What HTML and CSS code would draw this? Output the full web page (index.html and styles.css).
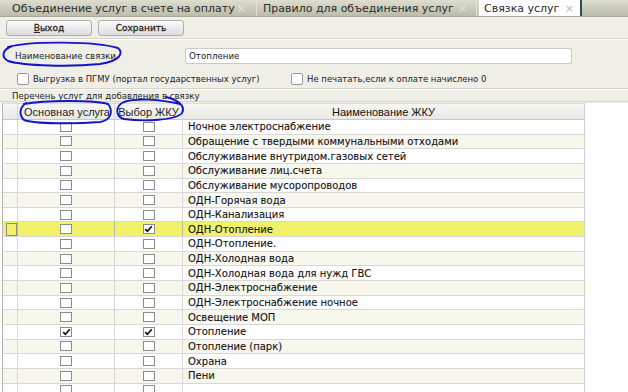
FILE: index.html
```html
<!DOCTYPE html>
<html lang="ru">
<head>
<meta charset="utf-8">
<title>Связка услуг</title>
<link rel="stylesheet" href="styles.css">
</head>
<body>
<div class="page">
  <div class="tabs">
    <div class="tab tab-1"><span class="tab-text">Объединение услуг в счете на оплату</span><span class="tab-x">×</span></div>
    <div class="tab tab-2"><span class="tab-text">Правило для объединения услуг</span><span class="tab-x">×</span></div>
    <div class="tab tab-active"><span class="tab-text">Связка услуг</span><span class="tab-x">×</span></div>
  </div>
  <div class="toolbar">
    <button class="btn"><u>В</u>ыход</button>
    <button class="btn">Сохранить</button>
  </div>
  <div class="form">
    <div class="name-row">
      <span class="name-label">Наименование связки</span>
      <div class="input">Отопление</div>
    </div>
    <div class="checks">
      <label class="check check-1"><span class="box"></span>Выгрузка в ПГМУ (портал государственных услуг)</label>
      <label class="check check-2"><span class="box"></span>Не печатать,если к оплате начислено 0</label>
    </div>
    <div class="sep"></div>
    <div class="group-title">Перечень услуг для добавления в связку</div>
  </div>
  <div class="grid">
    <div class="grow ghead">
      <div class="c c-rh"></div>
      <div class="c c-main">Основная услуга</div>
      <div class="c c-sel">Выбор ЖКУ</div>
      <div class="c c-name">Наименование ЖКУ</div>
    </div>
    <div id="rows"></div>
  </div>
  <svg class="annot" width="628" height="392" viewBox="0 0 628 392">
    <path d="M8 47 C 30 41, 95 41, 118 48 C 124 53, 120 61, 100 64 C 70 67, 25 66, 8 61 C 1 57, 2 50, 12 46" />
    <path d="M24 104 C 45 100, 95 100, 108 104 C 113 110, 112 120, 100 122 C 75 124, 35 124, 24 120 C 19 115, 19 108, 26 103" />
    <path d="M166 97 C 178 100, 186 106, 182 113 C 176 120, 145 122, 124 119 C 115 116, 115 106, 124 102 C 135 98, 160 99, 180 104" />
  </svg>
</div>
<script src="app.js"></script>
</body>
</html>
```

FILE: styles.css
```css
* { box-sizing: border-box; }
html, body { margin: 0; padding: 0; }
body {
  width: 628px;
  height: 392px;
  overflow: hidden;
  background: #ffffff;
  font-family: "DejaVu Sans", Verdana, sans-serif;
  color: #1e1e1e;
}
.page { position: relative; width: 628px; height: 392px; overflow: hidden; }

/* tabs */
.tabs {
  height: 17px;
  display: flex;
  align-items: stretch;
  background: linear-gradient(#dedecf, #c9c9b9 60%, #bcbcab);
  border-bottom: 1px solid #a9a999;
}
.tab {
  display: flex;
  align-items: center;
  font-family: "DejaVu Sans", Verdana, sans-serif;
  font-size: 11px;
  color: #2b2b2b;
  border-right: 1px solid #e2e2d6;
  white-space: nowrap;
}
.tab-1 { padding-left: 12px; width: 257px; }
.tab-2 { padding-left: 6px; width: 220px; }
.tab-x { color: #e6e6dc; font-size: 11px; margin-left: auto; padding-right: 10px; }
.tab-1 .tab-x { padding-right: 10px; }
.tab-2 .tab-x { padding-right: 9px; }
.tab-active {
  width: 104px;
  margin-left: 1px;
  padding-left: 5px;
  background: #ffffff;
  border-left: 1px solid #d0d0c4;
  border-right: 2px solid #2f4a4a;
}
.tab-active .tab-x { color: #b8b8b8; padding-right: 6px; }

/* toolbar */
.toolbar {
  height: 22px;
  display: flex;
  align-items: center;
  gap: 6px;
  padding-left: 6px;
  background: #f0f0e9;
  border-bottom: 1px solid #d6d6ce;
}
.btn {
  width: 86px;
  height: 16px;
  padding: 0;
  border: 1px solid #aeaeae;
  border-radius: 3px;
  background: linear-gradient(#fbfbfb, #e9e9e9 55%, #dcdcdc);
  font-family: "DejaVu Sans", Verdana, sans-serif;
  font-size: 9px;
  color: #2a2a2a;
  -webkit-text-stroke: 0.3px #2a2a2a;
}
.btn u { text-decoration: underline; }

/* form */
.form {
  background: #efefe8;
  border-top: 1px solid #ffffff;
  height: 64px;
}
.name-row {
  display: flex;
  align-items: center;
  height: 24px;
  padding-top: 7px;
}
.name-label {
  width: 185px;
  padding-left: 15px;
  font-size: 8.7px;
  color: #222;
}
.input {
  width: 387px;
  height: 16px;
  background: #ffffff;
  border: 1px solid #cacac4;
  border-radius: 2px;
  padding-left: 3px;
  font-size: 8.7px;
  line-height: 14px;
  color: #1a1a1a;
}
.checks {
  display: flex;
  align-items: center;
  height: 13px;
  margin-top: 8px;
}
.check {
  display: flex;
  align-items: center;
  gap: 4px;
  font-size: 8.5px;
  color: #222;
}
.check-1 { padding-left: 17px; width: 291px; }
.box {
  width: 12px;
  height: 12px;
  background: #ffffff;
  border: 1px solid #9a9a9a;
  border-radius: 2px;
}
.sep {
  margin-top: 3px;
  height: 2px;
  border-top: 1px solid #d4d4cc;
  border-bottom: 1px solid #fafaf6;
}
.group-title {
  height: 12px;
  padding-left: 12px;
  font-size: 8.6px;
  line-height: 12px;
  color: #222;
  border-bottom: 1px solid #d6d6ce;
}

/* grid */
.grid {
  width: 583px;
  margin-left: 2px;
  border-left: 1px solid #b4b4b0;
  border-right: 1px solid #cfcfcf;
  background: #ffffff;
}
.grow {
  display: grid;
  grid-template-columns: 15px 97px 68px 1fr;
  height: 14.65px;
  border-bottom: 1px solid #d8d8d8;
}
.grow:nth-child(odd) { background: #f7f7ee; }
.grow:nth-child(even) { background: #ffffff; }
.ghead {
  height: 17px;
  background: linear-gradient(#f6f6f3, #e8e8e4) !important;
  border-top: 1px solid #dcdcd8;
  border-bottom: 1px solid #c8c8c4;
  font-family: "Liberation Sans", Arial, sans-serif;
  font-size: 11px;
  color: #1e1e1e;
}
.c {
  border-right: 1px solid #d6d6d6;
  display: flex;
  align-items: center;
  justify-content: center;
  overflow: hidden;
  white-space: nowrap;
}
.c-name {
  justify-content: flex-start;
  padding-left: 5px;
  border-right: 0;
  font-size: 10px;
  color: #111;
  -webkit-text-stroke: 0.1px #111;
}
.ghead .c-name { justify-content: center; font-size: 11px; padding-left: 0; -webkit-text-stroke: 0; }
.ghead .c-main { padding-left: 2px; }
.cb {
  width: 12px;
  height: 10px;
  background: #ffffff;
  border: 1px solid #8c8c8c;
  display: flex;
  align-items: center;
  justify-content: center;
}
.cb svg { display: block; }
.grow.selected { background: #f1f16c !important; }
.grow.selected .c { border-right-color: #b8b8a0; }
.grow.selected .c-rh { padding: 1px 0; }
.grow.selected .c-rh::after {
  content: "";
  display: block;
  width: 11px;
  height: 11px;
  border: 1px solid #8e8e80;
  margin-left: 3px;
}

/* annotations */
.annot {
  position: absolute;
  left: 0;
  top: 0;
  pointer-events: none;
}
.annot path {
  fill: none;
  stroke: #1414c8;
  stroke-width: 1.9;
  stroke-linecap: round;
}
```

FILE: app.js
```js
const items = [
  ["Ночное электроснабжение", false, false],
  ["Обращение с твердыми коммунальными отходами", false, false],
  ["Обслуживание внутридом.газовых сетей", false, false],
  ["Обслуживание лиц.счета", false, false],
  ["Обслуживание мусоропроводов", false, false],
  ["ОДН-Горячая вода", false, false],
  ["ОДН-Канализация", false, false],
  ["ОДН-Отопление", false, true, true],
  ["ОДН-Отопление.", false, false],
  ["ОДН-Холодная вода", false, false],
  ["ОДН-Холодная вода для нужд ГВС", false, false],
  ["ОДН-Электроснабжение", false, false],
  ["ОДН-Электроснабжение ночное", false, false],
  ["Освещение МОП", false, false],
  ["Отопление", true, true],
  ["Отопление (парк)", false, false],
  ["Охрана", false, false],
  ["Пени", false, false],
  ["", false, false]
];
const check = '<svg width="9" height="8" viewBox="0 0 9 8"><path d="M1.2 4.2 L3.4 6.3 L7.8 1.3" fill="none" stroke="#111" stroke-width="1.7"/></svg>';
const rows = document.getElementById('rows');
const grid = rows.parentNode;
items.forEach(([name, a, b, sel]) => {
  const r = document.createElement('div');
  r.className = 'grow' + (sel ? ' selected' : '');
  r.innerHTML =
    '<div class="c c-rh"></div>' +
    '<div class="c c-main"><span class="cb">' + (a ? check : '') + '</span></div>' +
    '<div class="c c-sel"><span class="cb">' + (b ? check : '') + '</span></div>' +
    '<div class="c c-name"></div>';
  r.querySelector('.c-name').textContent = name;
  grid.insertBefore(r, rows);
});
rows.remove();
```
